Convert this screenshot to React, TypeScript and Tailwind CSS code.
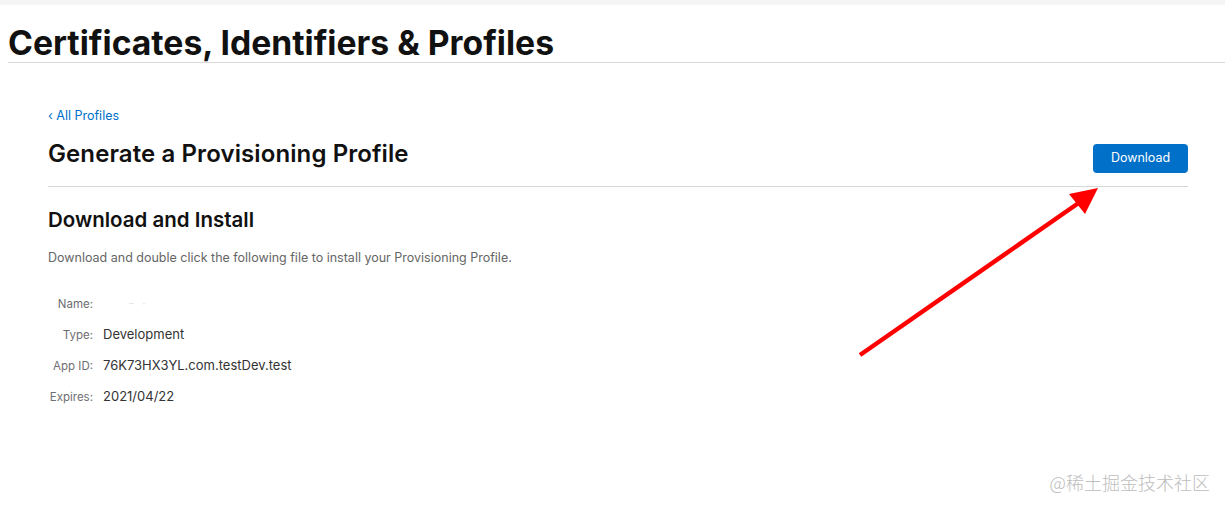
const details = [
  { label: "Name:", value: "" },
  { label: "Type:", value: "Development" },
  { label: "App ID:", value: "76K73HX3YL.com.testDev.test" },
  { label: "Expires:", value: "2021/04/22" },
];

export default function App() {
  return (
    <div
      className="relative h-[509px] w-[1225px] overflow-hidden bg-white text-[#1d1d1f]"
      style={{ fontFamily: "Inter, 'Noto Sans', sans-serif" }}
    >
      <div className="h-[5px] bg-[#f5f5f5]"></div>

      {/* Page header */}
      <div className="ml-2">
        <h1 className="pt-[19px] text-[33.7px] leading-[38px] font-bold text-[#111]">
          Certificates, Identifiers &amp; Profiles
        </h1>
        <div className="h-px bg-[#d9d9d9]"></div>
      </div>

      {/* Content */}
      <div className="mx-12 w-[1140px] pt-[45px]">
        <a className="block text-[12.5px] leading-4 text-[#0070c9]">‹ All Profiles</a>

        <div className="mt-[16px] flex items-start justify-between">
          <h2 className="text-[24px] leading-7 font-semibold tracking-[0.1px] text-[#111]">
            Generate a Provisioning Profile
          </h2>
          <button className="mt-[4px] h-[29px] w-[95px] rounded-[4px] bg-[#0070c9] text-[12.5px] text-white">
            Download
          </button>
        </div>

        <div className="mt-[13px] h-px bg-[#d6d6d6]"></div>

        <h3 className="mt-[21px] text-[20.5px] leading-6 font-semibold text-[#111]">Download and Install</h3>
        <p className="mt-[18px] text-[12.5px] leading-4 text-[#666]">
          Download and double click the following file to install your Provisioning Profile.
        </p>

        <div className="mt-[29px] flex flex-col gap-[15px]">
          {details.map((row) => (
            <div key={row.label} className="flex h-4 items-baseline">
              <span className="w-[45px] text-right text-[11.5px] leading-4 text-[#6e6e73]">{row.label}</span>
              <span className="ml-[10px] text-[13px] leading-4 text-[#333]">
                {row.value || <span className="text-[#e6e6e6]">&nbsp;&nbsp;&nbsp;&nbsp;&nbsp;&nbsp;&nbsp;-&nbsp;&nbsp;·</span>}
              </span>
            </div>
          ))}
        </div>
      </div>

      {/* Annotation arrow */}
      <svg className="absolute left-0 top-0" width="1225" height="509" viewBox="0 0 1225 509">
        <line x1="860" y1="355" x2="1080" y2="202" stroke="#ff0000" strokeWidth="4.5" />
        <polygon points="1098,188 1069,194 1085,214" fill="#ff0000" />
      </svg>

      {/* Watermark */}
      <div
        className="absolute right-[15px] top-[470px] text-[18px] leading-6 font-light text-[#bdbdbd]"
        style={{ fontFamily: "'Noto Sans CJK SC', sans-serif" }}
      >
        @稀土掘金技术社区
      </div>
    </div>
  );
}
